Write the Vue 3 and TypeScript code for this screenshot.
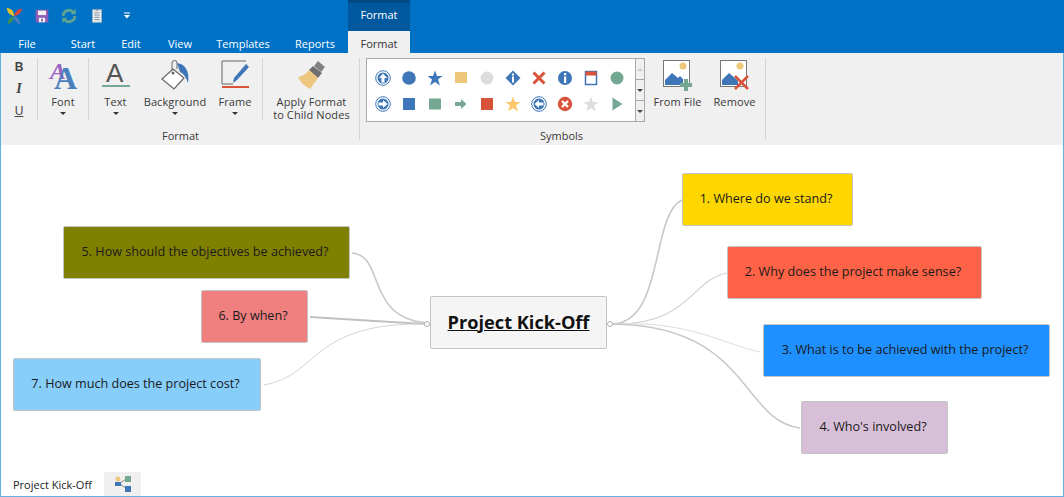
<script setup lang="ts">
interface MapNode { id: number; label: string; x: number; y: number; w: number; color: string }

// page coordinates, the svg viewBox and the node offsets take care of the canvas origin
const nodes: MapNode[] = [
  { id: 1, label: '1. Where do we stand?', x: 682, y: 173, w: 171, color: '#ffd700' },
  { id: 2, label: '2. Why does the project make sense?', x: 727, y: 246, w: 255, color: '#ff6347' },
  { id: 3, label: '3. What is to be achieved with the project?', x: 763, y: 324, w: 287, color: '#1e90ff' },
  { id: 4, label: "4. Who's involved?", x: 801, y: 401, w: 147, color: '#d8bfd8' },
  { id: 5, label: '5. How should the objectives be achieved?', x: 63, y: 226, w: 287, color: '#808000' },
  { id: 6, label: '6. By when?', x: 201, y: 290, w: 107, color: '#f08080' },
  { id: 7, label: '7. How much does the project cost?', x: 13, y: 358, w: 248, color: '#87cefa' },
]

const links = [
  { d: 'M611 324C665 324 650 215 682 200', w: 1.6, c: '#c8c8c8' },
  { d: 'M611 324C690 326 690 280 727 273', w: 1.2, c: '#d0d0d0' },
  { d: 'M611 324C690 320 725 345 760 352', w: 1, c: '#dddddd' },
  { d: 'M611 324C750 325 740 420 800 428', w: 1.5, c: '#c8c8c8' },
  { d: 'M352 253C385 255 365 318 427 323', w: 1.6, c: '#c8c8c8' },
  { d: 'M310 317C360 320 390 322 427 324', w: 2, c: '#c0c0c0' },
  { d: 'M264 385C320 375 310 322 427 324', w: 1, c: '#d4d4d4' },
]

const tabs = ['File', 'Start', 'Edit', 'View', 'Templates', 'Reports']

function nodeStyle(n: MapNode) {
  return { left: `${n.x - 1}px`, top: `${n.y - 145}px`, width: `${n.w}px`, background: n.color }
}
</script>

<template>
  <div class="app">
    <!-- Title bar -->
    <div class="titlebar">
      <div class="qat">
        <svg class="qat-icon" viewBox="0 0 20 20">
          <path d="M10 10C6 9 2 6 2 1 7 1 10 5 10 10Z" fill="#e8c32e" />
          <path d="M10 10C11 6 14 2 19 2 18 7 14 10 10 10Z" fill="#d9453f" />
          <path d="M10 10C6 11 3 14 3 19 8 18 10 14 10 10Z" fill="#3f8f5a" />
          <path d="M10 10C14 11 16 14 17 19 12 18 10 14 10 10Z" fill="#4a7fc0" />
        </svg>
        <svg class="qat-icon" viewBox="0 0 20 20">
          <path d="M3 3H17V17H3Z" fill="#8b5bb5" />
          <path d="M5.500 4H14.500V9H5.500Z" fill="#f2f2f2" />
          <path d="M6.500 12H13.500V17H6.500Z" fill="#f2f2f2" />
          <path d="M9 13H11V16H9Z" fill="#8b5bb5" />
        </svg>
        <svg class="qat-icon" viewBox="0 0 20 20" fill="none" stroke="#5fa58f" stroke-width="3">
          <path d="M3.500 10A6.500 6.500 0 0 1 15 6" />
          <path d="M16.500 10A6.500 6.500 0 0 1 5 14" />
          <path d="M17.500 2V8H12Z" fill="#5fa58f" stroke="none" />
          <path d="M2.500 18V12H8Z" fill="#5fa58f" stroke="none" />
        </svg>
        <svg class="qat-icon" viewBox="0 0 20 20">
          <path d="M5 3H15V17H5Z" fill="#e9eef2" stroke="#9fb4c4" />
          <path d="M7 6.500H13M7 9H13M7 11.500H13M7 14H13" stroke="#7d8c99" />
          <path d="M8.500 2H11.500V4H8.500Z" fill="#7d8c99" />
        </svg>
        <svg class="qat-more" viewBox="0 0 8 8">
          <path d="M1 1H7" stroke="#fff" />
          <path d="M1 3H7L4 6.500Z" fill="#fff" />
        </svg>
      </div>
      <div class="context-tab">Format</div>
    </div>

    <!-- Tabs -->
    <div class="tabs">
      <span v-for="t in tabs" :key="t" class="tab">{{ t }}</span>
      <span class="tab active">Format</span>
    </div>

    <div class="body">
      <!-- Ribbon -->
      <div class="ribbon">
        <div class="group group-format">
          <div class="group-body">
            <div class="bius">
              <span class="bius-b">B</span>
              <span class="bius-i">I</span>
              <span class="bius-u">U</span>
            </div>
            <div class="big w-font sep-l sep-r">
              <svg class="big-icon" viewBox="0 0 32 32">
                <text x="3" y="20" class="glyph glyph-back">A</text>
                <text x="7" y="30" class="glyph glyph-front">A</text>
              </svg>
              <span class="big-label">Font</span>
              <i class="caret"></i>
            </div>
            <div class="big w-text">
              <svg class="big-icon" viewBox="0 0 32 32">
                <text x="6" y="23" class="glyph-text">A</text>
                <path d="M2 27H30" stroke="#74a892" stroke-width="2" />
              </svg>
              <span class="big-label">Text</span>
              <i class="caret"></i>
            </div>
            <div class="big w-bg">
              <svg class="big-icon" viewBox="0 0 32 32">
                <path d="M14 10L25 19 15 30 3 20Z" fill="#fff" stroke="#666" stroke-width="1.200" />
                <path d="M13 12V4A2.500 2.500 0 0 1 18 4V10" fill="none" stroke="#666" />
                <circle cx="14" cy="14" r="1.500" fill="#666" />
                <path d="M18 4C26 5 31 12 29 24 27 18 25 15 21 13Z" fill="#3f76b8" />
              </svg>
              <span class="big-label">Background</span>
              <i class="caret"></i>
            </div>
            <div class="big w-frame sep-r">
              <svg class="big-icon" viewBox="0 0 32 32">
                <path d="M27 2H3V25H14" fill="none" stroke="#666" />
                <path d="M27 5L30 8 18 21 14 24 15 19Z" fill="#3f76b8" />
                <path d="M3 28H30" stroke="#d9533a" stroke-width="2" />
              </svg>
              <span class="big-label">Frame</span>
              <i class="caret"></i>
            </div>
            <div class="big w-apply">
              <svg class="big-icon" viewBox="0 0 32 32">
                <path d="M22 2L29 8 25 13 18 7Z" fill="#808080" />
                <path d="M17 7L26 14 22 19 13 11Z" fill="#6f6f6f" />
                <path d="M13 11L22 19 14 30C8 27 4 23 2 18 7 17 10 15 13 11Z" fill="#edc77f" />
              </svg>
              <span class="big-label">Apply Format<br />to Child Nodes</span>
            </div>
          </div>
          <div class="group-label">Format</div>
        </div>

        <div class="group group-symbols">
          <div class="group-body">
            <div class="gallery">
              <div class="symbols">
                <svg viewBox="0 0 16 16"><circle cx="8" cy="8" r="7.300" fill="#fff" stroke="#3f76b8" /><circle cx="8" cy="8" r="5.500" fill="#3f76b8" /><path d="M8 3.500L12 8H9.500V12.500H6.500V8H4Z" fill="#fff" /></svg>
                <svg viewBox="0 0 16 16"><circle cx="8" cy="8" r="6.800" fill="#3f76b8" /></svg>
                <svg viewBox="0 0 16 16"><path d="M8 0.500L10 6H15.500L11 9.500 13 15.500 8 12 3 15.500 5 9.500 0.500 6H6Z" fill="#3f76b8" /></svg>
                <svg viewBox="0 0 16 16"><rect x="2" y="2" width="12" height="11" fill="#eec77b" /></svg>
                <svg viewBox="0 0 16 16"><circle cx="8" cy="8" r="6.500" fill="#dddddd" /></svg>
                <svg viewBox="0 0 16 16"><path d="M8 0.500L15.500 8 8 15.500 0.500 8Z" fill="#3f76b8" /><rect x="7" y="3.500" width="2" height="2" fill="#fff" /><rect x="7" y="6.500" width="2" height="6" fill="#fff" /></svg>
                <svg viewBox="0 0 16 16"><path d="M2.500 2.500L13.500 13.500M13.500 2.500L2.500 13.500" stroke="#d9533a" stroke-width="3" /></svg>
                <svg viewBox="0 0 16 16"><circle cx="8" cy="8" r="7" fill="#3f76b8" /><rect x="7" y="3" width="2.200" height="2.200" fill="#fff" /><rect x="7" y="6.500" width="2.200" height="6.500" fill="#fff" /></svg>
                <svg viewBox="0 0 16 16"><rect x="2.500" y="1.500" width="11" height="13" fill="#fff" stroke="#3f76b8" stroke-width="1.500" /><rect x="2.500" y="1.500" width="11" height="4" fill="#d9533a" /></svg>
                <svg viewBox="0 0 16 16"><circle cx="8" cy="8" r="6.500" fill="#74a892" /></svg>
                <svg viewBox="0 0 16 16"><circle cx="8" cy="8" r="7.300" fill="#fff" stroke="#3f76b8" /><circle cx="8" cy="8" r="5.500" fill="#3f76b8" /><path d="M12.500 8L8 12V9.500H3.500V6.500H8V4Z" fill="#fff" /></svg>
                <svg viewBox="0 0 16 16"><rect x="2" y="2" width="12" height="12" fill="#3f76b8" /></svg>
                <svg viewBox="0 0 16 16"><rect x="2" y="2.500" width="12" height="11" fill="#74a892" /></svg>
                <svg viewBox="0 0 16 16"><path d="M8 3L13.500 8 8 13V10H2V6H8Z" fill="#74a892" /></svg>
                <svg viewBox="0 0 16 16"><rect x="2" y="2" width="12" height="12" fill="#d9533a" /></svg>
                <svg viewBox="0 0 16 16"><path d="M8 0.500L10 6H15.500L11 9.500 13 15.500 8 12 3 15.500 5 9.500 0.500 6H6Z" fill="#fcc76c" /></svg>
                <svg viewBox="0 0 16 16"><circle cx="8" cy="8" r="7.300" fill="#fff" stroke="#3f76b8" /><circle cx="8" cy="8" r="5.500" fill="#3f76b8" /><path d="M3.500 8L8 4V6.500H12.500V9.500H8V12Z" fill="#fff" /></svg>
                <svg viewBox="0 0 16 16"><circle cx="8" cy="8" r="7.200" fill="#d9533a" /><path d="M5 5L11 11M11 5L5 11" stroke="#fff" stroke-width="2.400" /></svg>
                <svg viewBox="0 0 16 16"><path d="M8 0.500L10 6H15.500L11 9.500 13 15.500 8 12 3 15.500 5 9.500 0.500 6H6Z" fill="#dddddd" /></svg>
                <svg viewBox="0 0 16 16"><path d="M3.500 1.500L13.500 8 3.500 14.500Z" fill="#74a892" /></svg>
              </div>
              <div class="scroller">
                <span class="scroll-btn"><i class="tri-up"></i></span>
                <span class="scroll-btn"><i class="tri-down"></i></span>
                <span class="scroll-btn more"><i class="tri-down"></i></span>
              </div>
            </div>
            <div class="big w-img first-img">
              <svg class="big-icon" viewBox="0 0 32 32">
                <rect x="1.500" y="1.500" width="26" height="26" fill="#fff" stroke="#777" />
                <circle cx="21" cy="7" r="3.500" fill="#eec77b" />
                <path d="M3 26V21L10 14 16 19 18 17 21 20V26Z" fill="#3f76b8" />
                <path d="M22 20H26V24H30V28H26V32H22V28H18V24H22Z" fill="#74a892" />
              </svg>
              <span class="big-label">From File</span>
            </div>
            <div class="big w-img">
              <svg class="big-icon" viewBox="0 0 32 32">
                <rect x="1.500" y="1.500" width="26" height="26" fill="#fff" stroke="#777" />
                <circle cx="21" cy="7" r="3.500" fill="#eec77b" />
                <path d="M3 26V21L10 14 16 19 19 22V26Z" fill="#3f76b8" />
                <path d="M16 17L29 30M29 17L16 30" stroke="#d9533a" stroke-width="2.500" />
              </svg>
              <span class="big-label">Remove</span>
            </div>
          </div>
          <div class="group-label symbols-label">Symbols</div>
        </div>
      </div>

      <!-- Mind map -->
      <div class="canvas">
        <svg class="links" viewBox="1 145 1062 327">
          <path v-for="(l, i) in links" :key="i" :d="l.d" :stroke="l.c" :stroke-width="l.w" fill="none" />
          <circle cx="427" cy="324" r="2.500" fill="#fff" stroke="#b0b0b0" />
          <circle cx="610" cy="324" r="2.500" fill="#fff" stroke="#b0b0b0" />
        </svg>
        <div class="center-node">Project Kick-Off</div>
        <div v-for="n in nodes" :key="n.id" class="node" :style="nodeStyle(n)">{{ n.label }}</div>
      </div>

      <!-- Sheet tabs -->
      <div class="sheets">
        <span class="sheet-name">Project Kick-Off</span>
        <span class="sheet-icon">
          <svg viewBox="0 0 18 18">
            <path d="M6 8L12 4M6 9L13 14" stroke="#888" />
            <circle cx="4" cy="4" r="2.500" fill="#eec77b" />
            <rect x="1" y="7" width="6" height="4" fill="#3f76b8" />
            <rect x="11" y="1" width="6" height="6" fill="#74a892" />
            <rect x="11" y="11" width="6" height="6" fill="#3f76b8" />
          </svg>
        </span>
      </div>
    </div>
  </div>
</template>

<style>
html, body { margin: 0; padding: 0; background: #fff; }
</style>

<style scoped>
.app {
  width: 1064px; height: 497px; overflow: hidden; display: flex; flex-direction: column;
  font-family: "Open Sans", "Noto Sans", "Liberation Sans", sans-serif; font-size: 11px; color: #3a3a3a;
}

/* Title bar */
.titlebar { height: 31px; background: #0072c6; display: flex; flex-shrink: 0; }
.qat { width: 348px; display: flex; align-items: center; padding-left: 5px; box-sizing: border-box; }
.qat-icon { width: 18px; height: 18px; margin-right: 9.7px; }
.qat-more { width: 8px; height: 8px; margin-left: 7px; }
.context-tab {
  width: 62px; background: #00599f; border-top: 3px solid #004a86; box-sizing: border-box;
  color: #fff; text-align: center; line-height: 24px;
}

.tabs {
  height: 22px; background: #0072c6; flex-shrink: 0; display: grid;
  grid-template-columns: 54px 58px 38px 60px 66px 72px 62px;
}
.tab { color: #fff; text-align: center; line-height: 25px; }
.tab:nth-child(6) { padding-left: 6px; }
.tab.active { background: #f0f0f0; color: #333; }

.body {
  flex: 1; min-height: 0; display: flex; flex-direction: column;
  border: 1px solid #66b0e3; border-top: none;
}

/* Ribbon */
.ribbon { height: 92px; background: #f0f0f0; display: flex; flex-shrink: 0; }
.group { display: flex; flex-direction: column; box-sizing: border-box; position: relative; }
.group::after {
  content: ''; position: absolute; right: 0; top: 5px; bottom: 5px; width: 1px; background: #d4d4d4;
}
.group-format { width: 359px; }
.group-symbols { width: 406px; }
.group-body { display: flex; height: 75px; padding-top: 5px; box-sizing: border-box; }
.group-label { text-align: center; line-height: 14px; margin-top: 1px; }
.symbols-label { padding-right: 3px; }

.bius {
  width: 36px; display: flex; flex-direction: column; gap: 6px; align-items: center;
  box-sizing: border-box; font-family: "Liberation Sans", sans-serif; font-size: 12px; color: #444;
  line-height: 16px; padding-top: 1px;
}
.bius-b { font-weight: bold; }
.bius-i { font-family: "Liberation Serif", serif; font-style: italic; font-weight: bold; font-size: 14px; }
.bius-u { text-decoration: underline; }

.big { display: flex; flex-direction: column; align-items: center; box-sizing: border-box; height: 62px; position: relative; }
.big-icon { width: 32px; height: 32px; flex-shrink: 0; margin: 1px 0 4px; }
.big-label { text-align: center; line-height: 13px; white-space: nowrap; letter-spacing: 0.1px; }
.w-font { width: 52px; }
.w-text { width: 53px; }
.w-bg { width: 66px; }
.w-frame { width: 55px; }
.w-apply { width: 97px; }
.w-img { width: 57px; }
.first-img { margin-left: 4px; }
.sep-l { border-left: 1px solid #d4d4d4; }
.sep-r { border-right: 1px solid #d4d4d4; }
.caret {
  width: 0; height: 0; border: 3px solid transparent; border-top-color: #333; border-bottom: none; margin-top: 4px;
}

.glyph { font-family: "Liberation Serif", serif; font-weight: bold; }
.glyph-back { font-size: 24px; fill: #9b63c4; font-style: italic; }
.glyph-front { font-size: 32px; fill: #4a80bd; }
.glyph-text { font-family: "Liberation Sans", sans-serif; font-size: 26px; fill: #555; }

/* Symbol gallery */
.gallery { margin-left: 6px; width: 279px; height: 64px; display: flex; border: 1px solid #a8a8a8; box-sizing: border-box; background: #fff; flex-shrink: 0; }
.symbols {
  flex: 1; display: grid; grid-template-columns: repeat(10, 26px); grid-auto-rows: 26px;
  align-items: center; justify-items: center; padding: 6px 0 0 3px; box-sizing: border-box;
}
.symbols svg { width: 16px; height: 16px; }
.scroller { width: 8px; display: flex; flex-direction: column; border-left: 1px solid #a8a8a8; background: #f0f0f0; }
.scroll-btn {
  flex: 1; display: flex; align-items: center; justify-content: center;
  border-bottom: 1px solid #a8a8a8;
}
.scroll-btn.more { border-bottom: none; }
.tri-up { width: 0; height: 0; border: 3px solid transparent; border-bottom-color: #c8c8c8; border-top: none; }
.tri-down { width: 0; height: 0; border: 3px solid transparent; border-top-color: #444; border-bottom: none; }

/* Map */
.canvas { position: relative; flex: 1; min-height: 0; background: #fff; }
.links { position: absolute; left: 0; top: 0; width: 1062px; height: 327px; }
.node, .center-node {
  position: absolute; height: 53px; box-sizing: border-box; display: flex; align-items: center; justify-content: center;
  border: 1px solid #c4c4c4; border-radius: 2px; color: #1a1a1a; font-size: 12.6px; white-space: nowrap; padding: 0 3px 2px 0;
}
.center-node {
  left: 429px; top: 151px; width: 177px; background: #f5f5f5; padding: 0 0 2px;
  font-size: 18.2px; font-weight: 700; color: #111; text-decoration: underline;
}

/* Sheet tabs */
.sheets { height: 24px; display: flex; align-items: center; background: #fff; flex-shrink: 0; }
.sheet-name { margin-left: 12px; width: 91px; color: #222; }
.sheet-icon { width: 37px; height: 24px; background: #f0f0f0; display: flex; align-items: center; justify-content: center; }
.sheet-icon svg { width: 18px; height: 18px; }
</style>
